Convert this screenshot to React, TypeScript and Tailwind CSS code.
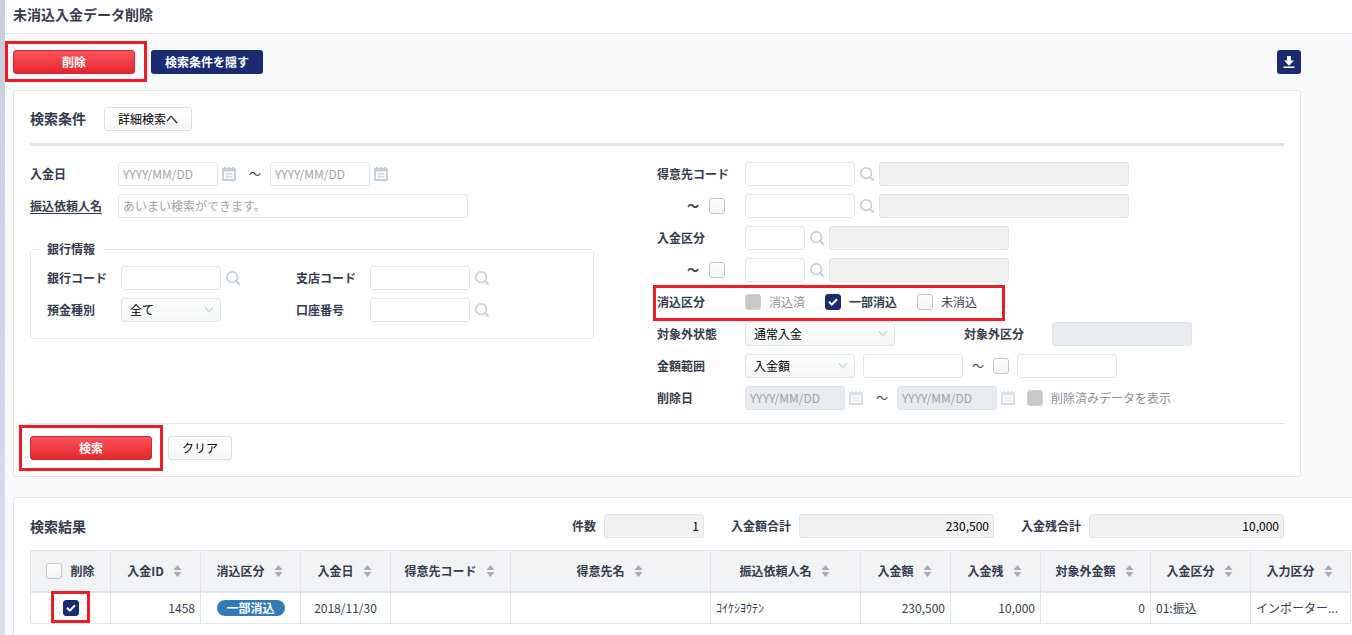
import React from 'react';

const input = 'h-6 rounded-[3px] border border-[#dfe4ef] bg-white px-1 pb-0.5 text-xs placeholder:text-[#a3a3a3]';
const readOnly = 'h-6 rounded-[3px] border border-[#dfe4ef] bg-[#f1f1f1] px-1 pb-0.5 text-xs text-black';
const disabledInput = 'h-6 rounded-[3px] border border-[#dfe4ef] bg-[#e8ebf0] px-1 pb-0.5 text-xs placeholder:text-[#a3a3a3]';
const whiteButton = 'h-6 rounded-[3px] border border-[#dedede] bg-gradient-to-b from-white to-[#f5f6f8] text-xs text-black';
const redButton = 'h-6 w-[122px] rounded-[3px] border border-[#cf2a33] bg-gradient-to-b from-[#fb525a] to-[#e4252e] text-xs font-bold text-white';

function SearchIcon() {
  return (
    <svg width="14" height="14" viewBox="0 0 14 14" fill="none" stroke="#c5d0de" strokeWidth="1.7">
      <circle cx="6.2" cy="6.2" r="5.3" />
      <path d="M10 10l3.6 3.6" strokeWidth="2" />
    </svg>
  );
}

function LookupButton({ label }: { label: string }) {
  return (
    <button type="button" aria-label={label} className="shrink-0">
      <SearchIcon />
    </button>
  );
}

function CalendarButton({ label, disabled = false }: { label: string; disabled?: boolean }) {
  return (
    <button type="button" aria-label={label} disabled={disabled} className="shrink-0 disabled:opacity-60">
      <svg width="14" height="14" viewBox="0 0 14 14">
        <path fill="#c5d0de" d="M0 2a1 1 0 0 1 1-1h1V0h2v1h2V0h2v1h2V0h2v1h1a1 1 0 0 1 1 1v11a1 1 0 0 1-1 1H1a1 1 0 0 1-1-1z" />
        <path fill="#fff" d="M2 4.5h10V12H2z" />
        <path fill="#c5d0de" d="M3.5 6h1.8v1.8H3.5zM6.1 6h1.8v1.8H6.1zM8.7 6h1.8v1.8H8.7zM3.5 8.8h1.8v1.8H3.5zM6.1 8.8h1.8v1.8H6.1zM8.7 8.8h1.8v1.8H8.7z" />
      </svg>
    </button>
  );
}

function Checkbox({ label, id, ...rest }: { label?: string; id?: string; defaultChecked?: boolean; disabled?: boolean }) {
  return (
    <span className="relative flex size-4 shrink-0">
      <input
        type="checkbox"
        id={id}
        aria-label={label}
        className="peer size-4 appearance-none rounded-[3px] border border-[#c6c6c6] bg-gradient-to-b from-white to-[#f2f3f6] checked:border-[#1a2b72] checked:bg-[#1a2b72] checked:bg-none disabled:border-[#d2d2d2] disabled:bg-[#c9c9c9] disabled:bg-none"
        {...rest}
      />
      <svg className="pointer-events-none absolute inset-0 hidden peer-checked:block" width="16" height="16" viewBox="0 0 16 16" fill="none" stroke="#fff" strokeWidth="2">
        <path d="M4 7.8l2.8 2.8L12 5.2" />
      </svg>
    </span>
  );
}

function CheckField({ id, text, className = '', ...rest }: { id: string; text: string; className?: string; defaultChecked?: boolean; disabled?: boolean }) {
  return (
    <div className="flex items-center gap-2">
      <Checkbox id={id} {...rest} />
      <label htmlFor={id} className={className}>{text}</label>
    </div>
  );
}

function Select({ id, label, value, width }: { id?: string; label?: string; value: string; width: string }) {
  return (
    <div className={'relative ' + width}>
      <select id={id} aria-label={label} className="block h-6 w-full appearance-none rounded-[3px] border border-[#dfe4ef] bg-gradient-to-b from-white to-[#f3f5f7] px-2 text-xs text-black">
        <option>{value}</option>
      </select>
      <svg className="pointer-events-none absolute top-2 right-[7px]" width="10" height="8" viewBox="0 0 10 8" fill="none" stroke="#c9d3e0" strokeWidth="1.3">
        <path d="M1 1.5l4 4 4-4" />
      </svg>
    </div>
  );
}

function Label({ id, children, className = 'w-[88px]' }: { id?: string; children: React.ReactNode; className?: string }) {
  return <label htmlFor={id} className={'shrink-0 font-bold ' + className}>{children}</label>;
}

function Callout({ className }: { className: string }) {
  return <span aria-hidden="true" className={'pointer-events-none absolute z-10 border-3 border-[#ee1c25] ' + className} />;
}

function RangeEnd({ label }: { label: string }) {
  return (
    <div className="flex w-[88px] shrink-0 items-center justify-end gap-[10px] pr-5 font-bold">
      <span className="w-3 text-center">～</span>
      <Checkbox label={label} />
    </div>
  );
}

function DateRange({ id, name, disabled = false }: { id: string; name: string; disabled?: boolean }) {
  const style = (disabled ? disabledInput : input) + ' w-[100px]';
  return (
    <div className="flex items-center gap-1">
      <input id={id} disabled={disabled} placeholder="YYYY/MM/DD" className={style} />
      <CalendarButton label={name + ' 開始'} disabled={disabled} />
      <span className="w-[26px] pl-1 text-center">～</span>
      <input aria-label={name + ' 終了'} disabled={disabled} placeholder="YYYY/MM/DD" className={style} />
      <CalendarButton label={name + ' 終了'} disabled={disabled} />
    </div>
  );
}

function SortIcon() {
  return (
    <svg width="9" height="12" viewBox="0 0 9 12" fill="#a9a9b8" className="shrink-0">
      <path d="M4.5 0L8.5 5h-8zM4.5 12L.5 7h8z" />
    </svg>
  );
}

function Total({ id, label, value, width }: { id: string; label: string; value: string; width: string }) {
  return (
    <div className="flex items-center gap-2">
      <Label id={id} className="">{label}</Label>
      <input id={id} readOnly value={value} className={readOnly + ' text-right ' + width} />
    </div>
  );
}

const columns = [
  { title: '入金ID', width: 'w-[90px]' },
  { title: '消込区分', width: 'w-[100px]' },
  { title: '入金日', width: 'w-[90px]' },
  { title: '得意先コード', width: 'w-[120px]' },
  { title: '得意先名', width: 'w-[200px]' },
  { title: '振込依頼人名', width: 'w-[150px]' },
  { title: '入金額', width: 'w-[90px]' },
  { title: '入金残', width: 'w-[90px]' },
  { title: '対象外金額', width: 'w-[110px]' },
  { title: '入金区分', width: 'w-[100px]' },
  { title: '入力区分', width: 'w-[101px]' },
];

const th = 'h-[43px] border-t border-b-2 border-l border-[#dfe4ef] bg-[#f1f3f5] p-0 font-bold last:border-r';
const td = 'h-[31px] border-b border-l border-[#dfe4ef] px-[5px] py-0 last:border-r';

function SearchPanel() {
  return (
    <section className="mr-[51px] rounded-[3px] border border-[#dfe4ef] bg-white p-4">
      <div className="flex items-center gap-[18px] border-b-3 border-[#dfe4ef] pb-3">
        <h2 className="pb-0.5 text-sm font-bold">検索条件</h2>
        <button type="button" className={whiteButton + ' w-[88px]'}>詳細検索へ</button>
      </div>

      <div className="grid grid-cols-2 border-b border-[#dfe4ef] pt-4 pb-[13px]">
        <div className="flex flex-col gap-2">
          <div className="flex items-center">
            <Label id="paid-from">入金日</Label>
            <DateRange id="paid-from" name="入金日" />
          </div>
          <div className="flex items-center">
            <Label id="payer" className="w-[88px] underline underline-offset-2">振込依頼人名</Label>
            <input id="payer" placeholder="あいまい検索ができます。" className={input + ' w-[350px]'} />
          </div>
          <fieldset className="mt-[15px] mr-[63px] rounded-[3px] border border-[#dfe4ef] px-2 pb-4">
            <legend className="px-2 leading-4 font-bold">銀行情報</legend>
            <div className="flex flex-col gap-2 px-2 pt-[9px]">
              <div className="flex items-center">
                <Label id="bank" className="w-[74px]">銀行コード</Label>
                <div className="flex w-[175px] items-center gap-[5px]">
                  <input id="bank" className={input + ' w-[100px]'} />
                  <LookupButton label="銀行検索" />
                </div>
                <Label id="branch" className="w-[74px]">支店コード</Label>
                <div className="flex items-center gap-[5px]">
                  <input id="branch" className={input + ' w-[100px]'} />
                  <LookupButton label="支店検索" />
                </div>
              </div>
              <div className="flex items-center">
                <Label id="deposit-kind" className="w-[74px]">預金種別</Label>
                <div className="w-[175px]">
                  <Select id="deposit-kind" value="全て" width="w-[100px]" />
                </div>
                <Label id="account" className="w-[74px]">口座番号</Label>
                <div className="flex items-center gap-[5px]">
                  <input id="account" className={input + ' w-[100px]'} />
                  <LookupButton label="口座検索" />
                </div>
              </div>
            </div>
          </fieldset>
        </div>

        <div className="flex flex-col gap-2">
          <div className="flex items-center">
            <Label id="customer">得意先コード</Label>
            <div className="flex items-center gap-[5px]">
              <input id="customer" className={input + ' w-[110px]'} />
              <LookupButton label="得意先検索" />
              <input readOnly aria-label="得意先名" className={readOnly + ' w-[250px]'} />
            </div>
          </div>
          <div className="flex items-center">
            <RangeEnd label="得意先コード範囲" />
            <div className="flex items-center gap-[5px]">
              <input aria-label="得意先コード 終了" className={input + ' w-[110px]'} />
              <LookupButton label="得意先検索 終了" />
              <input readOnly aria-label="得意先名 終了" className={readOnly + ' w-[250px]'} />
            </div>
          </div>
          <div className="flex items-center">
            <Label id="category">入金区分</Label>
            <div className="flex items-center gap-[5px]">
              <input id="category" className={input + ' w-[60px]'} />
              <LookupButton label="入金区分検索" />
              <input readOnly aria-label="入金区分名" className={readOnly + ' w-[180px]'} />
            </div>
          </div>
          <div className="flex items-center">
            <RangeEnd label="入金区分範囲" />
            <div className="flex items-center gap-[5px]">
              <input aria-label="入金区分 終了" className={input + ' w-[60px]'} />
              <LookupButton label="入金区分検索 終了" />
              <input readOnly aria-label="入金区分名 終了" className={readOnly + ' w-[180px]'} />
            </div>
          </div>
          <div className="relative flex h-6 items-center self-start">
            <Callout className="-top-[5px] -right-7 -bottom-[7px] -left-1" />
            <span className="w-[88px] font-bold">消込区分</span>
            <div className="flex items-center gap-5">
              <CheckField id="cleared" text="消込済" disabled className="text-[#8b909c]" />
              <CheckField id="partial" text="一部消込" defaultChecked className="font-bold" />
              <CheckField id="uncleared" text="未消込" />
            </div>
          </div>
          <div className="flex items-center">
            <Label id="status">対象外状態</Label>
            <Select id="status" value="通常入金" width="w-[150px]" />
            <Label id="excluded" className="ml-[69px] w-[88px]">対象外区分</Label>
            <input id="excluded" disabled className={disabledInput + ' w-[140px]'} />
          </div>
          <div className="flex items-center">
            <Label id="amount">金額範囲</Label>
            <div className="flex items-center gap-2">
              <Select id="amount" value="入金額" width="w-[110px]" />
              <input aria-label="金額 下限" className={input + ' w-[100px]'} />
              <span className="w-[14px] text-center">～</span>
              <Checkbox label="金額範囲指定" />
              <input aria-label="金額 上限" className={input + ' w-[100px]'} />
            </div>
          </div>
          <div className="flex items-center">
            <Label id="deleted-from">削除日</Label>
            <div className="flex items-center gap-3">
              <DateRange id="deleted-from" name="削除日" disabled />
              <CheckField id="show-deleted" text="削除済みデータを表示" disabled className="text-[#8b909c]" />
            </div>
          </div>
        </div>
      </div>

      <div className="flex gap-4 pt-3">
        <div className="relative">
          <button type="button" className={redButton + ' block'}>検索</button>
          <Callout className="-inset-[11px]" />
        </div>
        <button type="button" className={whiteButton + ' w-16'}>クリア</button>
      </div>
    </section>
  );
}

function ResultPanel() {
  return (
    <section className="flex-1 rounded-tl-[3px] border-t border-l border-[#dfe4ef] bg-white pt-4 pl-4">
      <div className="mb-3 flex items-center pr-[68px]">
        <h2 className="flex-1 text-sm font-bold">検索結果</h2>
        <div className="flex items-center gap-[27px]">
          <Total id="count" label="件数" value="1" width="w-[100px]" />
          <Total id="total" label="入金額合計" value="230,500" width="w-[195px]" />
          <Total id="rest" label="入金残合計" value="10,000" width="w-[195px]" />
        </div>
      </div>

      <table className="w-[1321px] table-fixed border-separate border-spacing-0">
        <thead>
          <tr>
            <th className={th + ' w-20 rounded-tl-[3px]'}>
              <div className="flex items-center justify-center gap-2">
                <Checkbox id="delete-all" />
                <label htmlFor="delete-all">削除</label>
              </div>
            </th>
            {columns.map((c) => (
              <th key={c.title} className={th + ' ' + c.width}>
                <div className="flex items-center justify-center gap-[9px] pr-0.5">
                  {c.title}
                  <SortIcon />
                </div>
              </th>
            ))}
          </tr>
        </thead>
        <tbody>
          <tr>
            <td className={td + ' rounded-bl-[3px]'}>
              <div className="relative mx-auto w-4">
                <Checkbox label="1458を削除" defaultChecked />
                <Callout className="-top-[9px] -right-[11px] -bottom-[7px] -left-3" />
              </div>
            </td>
            <td className={td + ' text-right'}>1458</td>
            <td className={td}>
              <span className="mx-auto block w-[68px] rounded-full bg-[#337ab7] text-center leading-4 font-bold text-white">一部消込</span>
            </td>
            <td className={td + ' text-center'}>2018/11/30</td>
            <td className={td} />
            <td className={td} />
            <td className={td}>ｺｲｹｼﾖｳﾃﾝ</td>
            <td className={td + ' text-right'}>230,500</td>
            <td className={td + ' text-right'}>10,000</td>
            <td className={td + ' text-right'}>0</td>
            <td className={td}>01:振込</td>
            <td className={td + ' whitespace-nowrap'}>インポーター...</td>
          </tr>
        </tbody>
      </table>
    </section>
  );
}

export default function App() {
  return (
    <div className="flex min-h-screen bg-[#f7f9fb] font-['Noto_Sans_CJK_JP',sans-serif] text-xs text-[#363c50]">
      <aside className="w-[5px] shrink-0 bg-gradient-to-b from-[#c5cee0] to-[#d6dfee]" />
      <div className="flex min-w-0 flex-1 flex-col">
        <header className="flex h-[34px] items-center border-b border-[#dfe4ef] bg-white px-2 pb-1.5">
          <h1 className="text-sm font-bold">未消込入金データ削除</h1>
        </header>
        <main className="flex flex-1 flex-col pt-4 pl-2">
          <div className="mr-[51px] mb-4 flex gap-4">
            <div className="relative">
              <button type="button" className={redButton + ' block'}>削除</button>
              <Callout className="-top-[9px] -right-3 -bottom-2 -left-2" />
            </div>
            <button type="button" className="h-6 w-28 rounded-[3px] bg-[#1a2b72] font-bold text-white">検索条件を隠す</button>
            <button type="button" aria-label="ダウンロード" className="ml-auto flex size-6 items-center justify-center rounded-[3px] bg-[#1a2b72]">
              <svg width="12" height="12" viewBox="0 0 12 12" fill="#fff">
                <path d="M4 0h4v4.5h3L6 9.7 1 4.5h3zM.5 10.5h11V12H.5z" />
              </svg>
            </button>
          </div>
          <div className="mb-5">
            <SearchPanel />
          </div>
          <ResultPanel />
        </main>
      </div>
    </div>
  );
}
